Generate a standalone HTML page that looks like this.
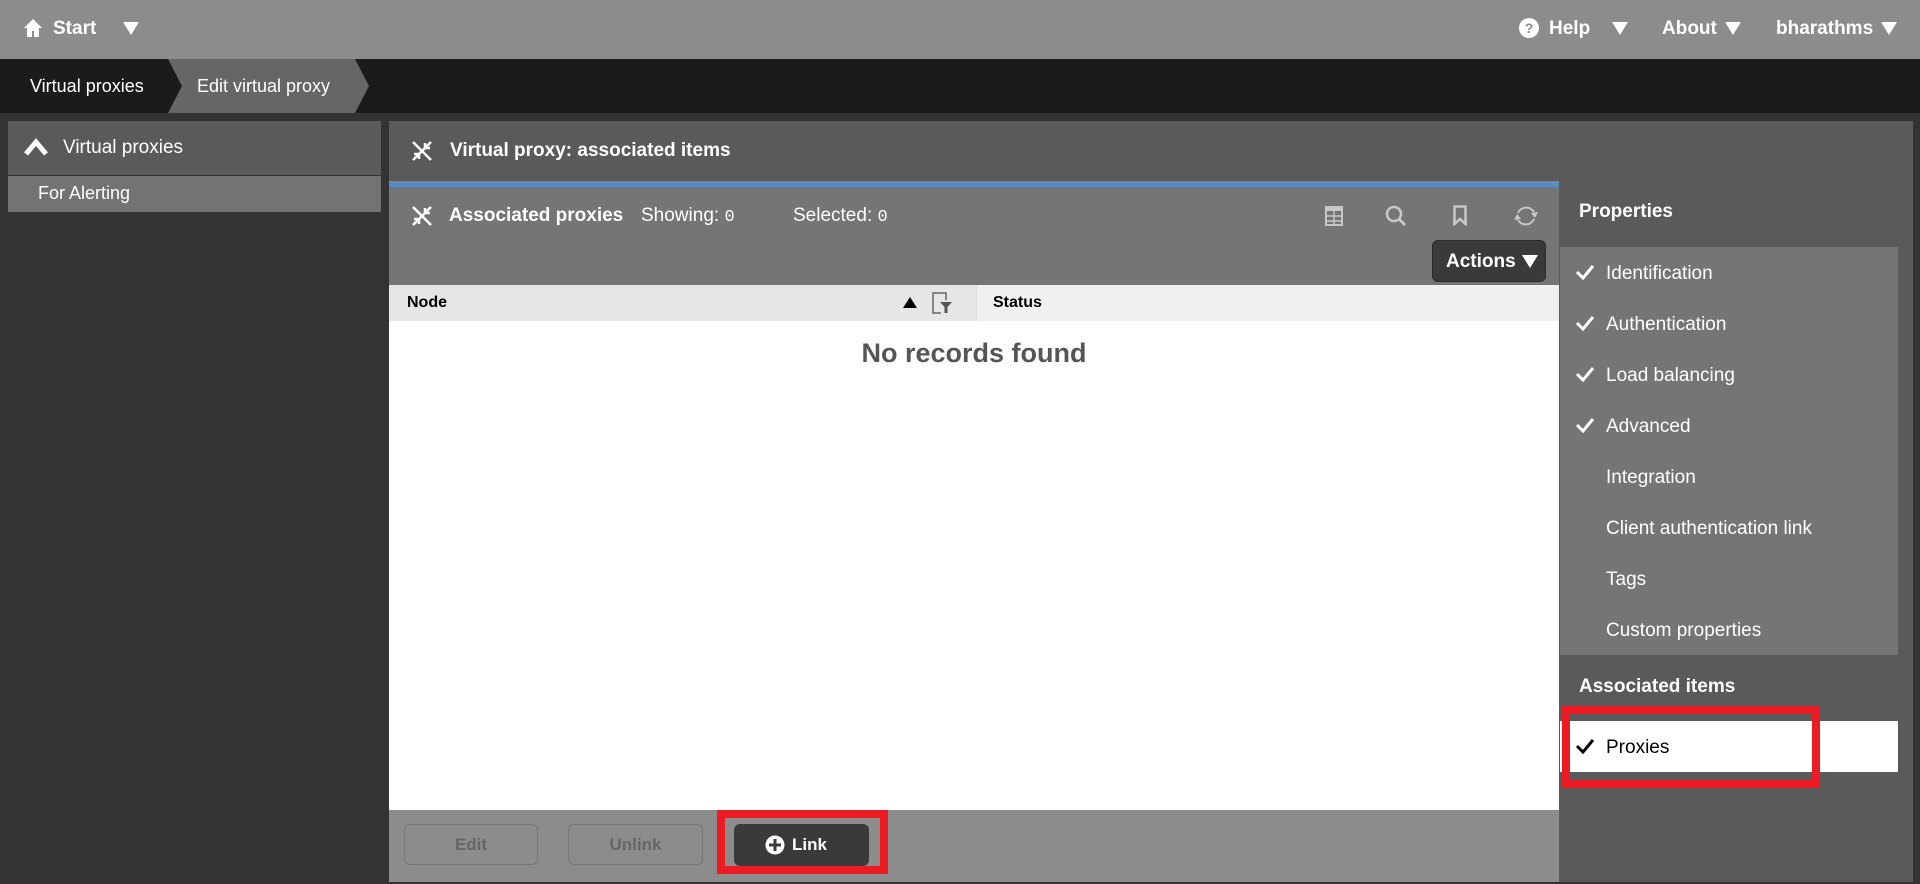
<!DOCTYPE html>
<html><head><meta charset="utf-8"><style>
*{margin:0;padding:0;box-sizing:border-box}
body{width:1920px;height:884px;background:#333;font-family:"Liberation Sans",sans-serif;color:#fff;position:relative;overflow:hidden}
.a{position:absolute}
.t{position:absolute;white-space:nowrap;line-height:1}
.b{font-weight:bold}
.tri{display:inline-block;width:0;height:0;border-left:8px solid transparent;border-right:8px solid transparent;border-top:13px solid #fff}
.mono{font-family:"Liberation Mono",monospace}
.li{position:absolute;left:1606px;font-size:19px;color:#fff}
.ck{position:absolute;left:1575px}
</style></head><body>
<!-- top bar -->
<div class="a" style="left:0;top:0;width:1920px;height:59px;background:#8c8c8c"></div>
<svg class="a" style="left:23px;top:18px" width="20" height="20" viewBox="0 0 20 20"><path d="M10 1 L1 10 H4 V19 H9 V13 H11 V19 H16 V10 H19 Z" fill="#fff"/></svg>
<div class="t b" style="left:53px;top:19px;font-size:19px">Start</div>
<div class="a tri" style="left:123px;top:22px"></div>
<svg class="a" style="left:1519px;top:18px" width="20" height="20" viewBox="0 0 20 20"><circle cx="10" cy="10" r="10" fill="#fff"/><text x="10" y="15" text-anchor="middle" font-size="14" font-weight="bold" fill="#8c8c8c" font-family="Liberation Sans">?</text></svg>
<div class="t b" style="left:1549px;top:19px;font-size:19px">Help</div>
<div class="a tri" style="left:1612px;top:22px"></div>
<div class="t b" style="left:1662px;top:19px;font-size:19px">About</div>
<div class="a tri" style="left:1725px;top:22px"></div>
<div class="t b" style="left:1776px;top:19px;font-size:19px">bharathms</div>
<div class="a tri" style="left:1881px;top:22px"></div>
<!-- breadcrumb -->
<div class="a" style="left:0;top:59px;width:1920px;height:54px;background:#1b1b1b"></div>
<svg class="a" style="left:0;top:59px" width="400" height="54"><polygon points="168,0 355,0 369,27 355,54 168,54 182,27" fill="#666"/></svg>
<div class="t" style="left:30px;top:77px;font-size:18px">Virtual proxies</div>
<div class="t" style="left:197px;top:77px;font-size:18px">Edit virtual proxy</div>
<!-- left panel -->
<div class="a" style="left:8px;top:121px;width:373px;height:54px;background:#5a5a5a"></div>
<svg class="a" style="left:23px;top:137px" width="26" height="20" viewBox="0 0 26 20"><path d="M3 17 L13 5 L23 17" stroke="#fff" stroke-width="5" fill="none"/></svg>
<div class="t" style="left:63px;top:138px;font-size:19px">Virtual proxies</div>
<div class="a" style="left:8px;top:176px;width:373px;height:36px;background:#737373"></div>
<div class="t" style="left:38px;top:184px;font-size:18px">For Alerting</div>
<!-- main panel -->
<div class="a" style="left:389px;top:121px;width:1524px;height:761px;background:#5a5a5a"></div>
<svg class="a" style="left:411px;top:140px" width="22" height="22" viewBox="0 0 22 22"><path d="M2 2 L20 20 M20 2 L2 20 M14 3 V8 H19 M3 14 H8 V19" stroke="#fff" stroke-width="2.5" fill="none"/></svg>
<div class="t b" style="left:450px;top:141px;font-size:19px">Virtual proxy: associated items</div>
<div class="a" style="left:389px;top:181px;width:1170px;height:6px;background:#5b8abf"></div>
<div class="a" style="left:389px;top:187px;width:1170px;height:98px;background:#757575"></div>
<svg class="a" style="left:411px;top:205px" width="22" height="22" viewBox="0 0 22 22"><path d="M2 2 L20 20 M20 2 L2 20 M14 3 V8 H19 M3 14 H8 V19" stroke="#fff" stroke-width="2.5" fill="none"/></svg>
<div class="t b" style="left:449px;top:206px;font-size:19px">Associated proxies</div>
<div class="t" style="left:641px;top:206px;font-size:19px">Showing: <span class="mono" style="font-size:17px">0</span></div>
<div class="t" style="left:793px;top:206px;font-size:19px">Selected: <span class="mono" style="font-size:17px">0</span></div>
<!-- toolbar icons -->
<svg class="a" style="left:1325px;top:206px" width="18" height="20" viewBox="0 0 18 20"><rect x="1" y="1" width="16" height="18" fill="none" stroke="#c8c8c8" stroke-width="2"/><rect x="1" y="1" width="16" height="4" fill="#c8c8c8"/><path d="M1 10H17M1 15H17M9 5V19" stroke="#c8c8c8" stroke-width="1.5"/></svg>
<svg class="a" style="left:1385px;top:205px" width="22" height="22" viewBox="0 0 22 22"><circle cx="9" cy="9" r="7" fill="none" stroke="#c8c8c8" stroke-width="2.5"/><path d="M14 14 L20 20" stroke="#c8c8c8" stroke-width="3"/></svg>
<svg class="a" style="left:1453px;top:205px" width="14" height="21" viewBox="0 0 14 21"><path d="M1.5 1.5 H12.5 V19 L7 14 L1.5 19 Z" fill="none" stroke="#c8c8c8" stroke-width="2.5"/></svg>
<svg class="a" style="left:1513px;top:203px" width="26" height="26" viewBox="0 0 26 26"><path d="M5 10 A9 9 0 0 1 21 9 M21 16 A9 9 0 0 1 5 17" fill="none" stroke="#c8c8c8" stroke-width="2"/><path d="M18 10 L25 9 L22 15Z M8 16 L1 17 L4 11Z" fill="#c8c8c8"/></svg>
<div class="a" style="left:1432px;top:240px;width:114px;height:42px;background:#3a3a3a;border-radius:6px;border:1px solid #2a2a2a"></div>
<div class="t b" style="left:1446px;top:252px;font-size:19px">Actions</div>
<div class="a tri" style="left:1522px;top:255px"></div>
<!-- table -->
<div class="a" style="left:389px;top:285px;width:587px;height:36px;background:#e6e6e6"></div>
<div class="a" style="left:976px;top:285px;width:583px;height:36px;background:#f0f0f0;border-left:1px solid #ddd"></div>
<div class="t b" style="left:407px;top:295px;font-size:16px;color:#000">Node</div>
<div class="a" style="left:903px;top:297px;width:0;height:0;border-left:7px solid transparent;border-right:7px solid transparent;border-bottom:11px solid #000"></div>
<svg class="a" style="left:932px;top:292px" width="20" height="22" viewBox="0 0 20 22"><path d="M9 1 H1 V21 H9" fill="none" stroke="#666" stroke-width="1.5"/><path d="M9 1 H14 V8" fill="none" stroke="#666" stroke-width="1.5"/><path d="M8 10 H20 L15.5 15 V21 H12.5 V15 Z" fill="#555"/></svg>
<div class="t b" style="left:993px;top:295px;font-size:16px;color:#000">Status</div>
<div class="a" style="left:389px;top:321px;width:1170px;height:489px;background:#fff"></div>
<div class="t b" style="left:389px;top:340px;width:1170px;text-align:center;font-size:27px;color:#555">No records found</div>
<!-- bottom -->
<div class="a" style="left:389px;top:810px;width:1170px;height:72px;background:#8c8c8c"></div>
<div class="a" style="left:404px;top:824px;width:134px;height:41px;border:1px solid #777;border-radius:6px"></div>
<div class="t b" style="left:404px;top:836px;width:134px;text-align:center;font-size:17px;color:#666">Edit</div>
<div class="a" style="left:568px;top:824px;width:135px;height:41px;border:1px solid #777;border-radius:6px"></div>
<div class="t b" style="left:568px;top:836px;width:135px;text-align:center;font-size:17px;color:#666">Unlink</div>
<div class="a" style="left:717px;top:810px;width:171px;height:64px;border:8px solid #ed1c24"></div>
<div class="a" style="left:734px;top:824px;width:135px;height:42px;background:#3a3a3a;border-radius:6px"></div>
<svg class="a" style="left:765px;top:835px" width="20" height="20" viewBox="0 0 20 20"><circle cx="10" cy="10" r="9.5" fill="#fff"/><path d="M10 4V16M4 10H16" stroke="#3a3a3a" stroke-width="3"/></svg>
<div class="t b" style="left:792px;top:836px;font-size:17px">Link</div>
<!-- right panel -->
<div class="t b" style="left:1579px;top:202px;font-size:19px">Properties</div>
<div class="a" style="left:1560px;top:247px;width:338px;height:408px;background:#757575"></div>
<svg class="ck" style="top:263px" width="20" height="18"><path d="M2 9 L8 15 L18 3" stroke="#fff" stroke-width="3" fill="none"/></svg>
<div class="li" style="top:263px">Identification</div>
<svg class="ck" style="top:314px" width="20" height="18"><path d="M2 9 L8 15 L18 3" stroke="#fff" stroke-width="3" fill="none"/></svg>
<div class="li" style="top:314px">Authentication</div>
<svg class="ck" style="top:365px" width="20" height="18"><path d="M2 9 L8 15 L18 3" stroke="#fff" stroke-width="3" fill="none"/></svg>
<div class="li" style="top:365px">Load balancing</div>
<svg class="ck" style="top:416px" width="20" height="18"><path d="M2 9 L8 15 L18 3" stroke="#fff" stroke-width="3" fill="none"/></svg>
<div class="li" style="top:416px">Advanced</div>
<div class="li" style="top:467px">Integration</div>
<div class="li" style="top:518px">Client authentication link</div>
<div class="li" style="top:569px">Tags</div>
<div class="li" style="top:620px">Custom properties</div>
<div class="t b" style="left:1579px;top:677px;font-size:19px">Associated items</div>
<div class="a" style="left:1560px;top:721px;width:338px;height:51px;background:#fff"></div>
<svg class="ck" style="top:737px" width="20" height="18"><path d="M2 9 L8 15 L18 3" stroke="#000" stroke-width="3" fill="none"/></svg>
<div class="li" style="top:737px;color:#000">Proxies</div>
<div class="a" style="left:1562px;top:706px;width:258px;height:81px;border:8px solid #ed1c24"></div>
</body></html>
